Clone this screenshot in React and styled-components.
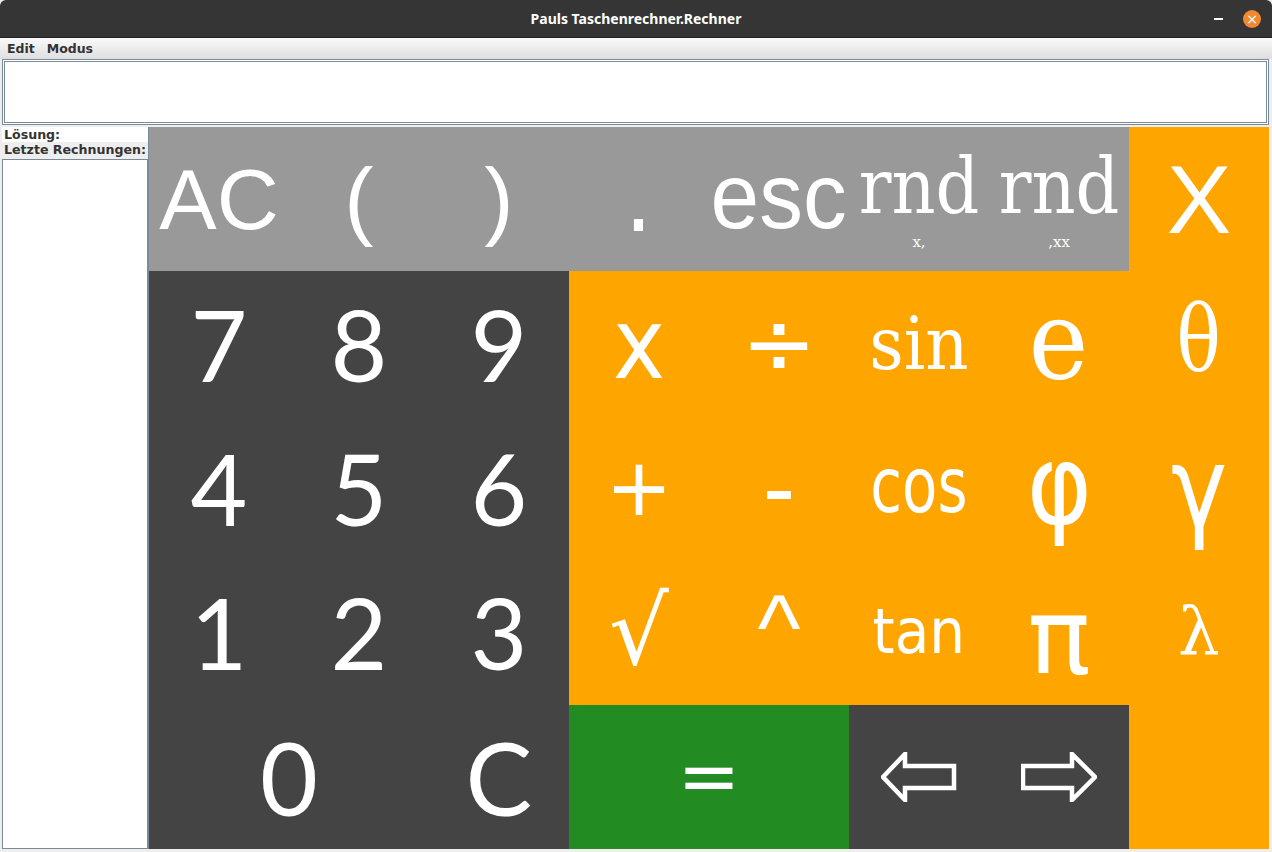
import React from 'react'
import styled, { createGlobalStyle } from 'styled-components'

const GlobalStyle = createGlobalStyle`
  html, body { margin: 0; padding: 0; background: #ffffff; }
  body { font-family: "DejaVu Sans", sans-serif; }
`

const fonts = {
  sans: '"Liberation Sans", Arial, sans-serif',
  dvs: '"DejaVu Sans", "Noto Sans", sans-serif',
  serif: '"DejaVu Serif", "Liberation Serif", serif',
  lato: 'Lato, "Noto Sans", sans-serif',
}

const colors = {
  grey: '#999999',
  dark: '#444444',
  orange: '#ffa500',
  green: '#228b22',
}

// Tasten in Lese-Reihenfolge, so wie das Swing-Grid sie legt
const keys = [
  { t: 'AC', bg: 'grey', f: 'sans', size: 86 },
  { t: '(', bg: 'grey', f: 'sans', size: 88 },
  { t: ')', bg: 'grey', f: 'sans', size: 88 },
  { t: '.', bg: 'grey', f: 'sans', size: 112, sx: 0.85, dy: -6 },
  { t: 'esc', bg: 'grey', f: 'sans', size: 92, sx: 0.95, dy: -3 },
  { t: 'rnd', sub: 'x,', bg: 'grey', f: 'serif', size: 76, sx: 0.9 },
  { t: 'rnd', sub: ',xx', bg: 'grey', f: 'serif', size: 76, sx: 0.9 },
  { t: 'X', bg: 'orange', f: 'sans', size: 97 },

  { t: '7', bg: 'dark', f: 'lato', size: 98 },
  { t: '8', bg: 'dark', f: 'lato', size: 98 },
  { t: '9', bg: 'dark', f: 'lato', size: 98 },
  { t: 'x', bg: 'orange', f: 'dvs', size: 98, sx: 0.9 },
  { t: '÷', bg: 'orange', f: 'dvs', size: 90 },
  { t: 'sin', bg: 'orange', f: 'serif', size: 73, sx: 0.92 },
  { t: 'e', bg: 'orange', f: 'serif', size: 110, sx: 0.92, dy: -4 },
  { t: 'θ', bg: 'orange', f: 'serif', size: 92, sx: 0.8, dy: -4 },

  { t: '4', bg: 'dark', f: 'lato', size: 98 },
  { t: '5', bg: 'dark', f: 'lato', size: 98 },
  { t: '6', bg: 'dark', f: 'lato', size: 98 },
  { t: '+', bg: 'orange', f: 'dvs', size: 80 },
  { t: '-', bg: 'orange', f: 'dvs', size: 100, sx: 0.9 },
  { t: 'cos', bg: 'orange', f: 'dvs', size: 76, sx: 0.76, dy: -2 },
  { t: 'φ', bg: 'orange', f: 'dvs', size: 110, sx: 0.9, dy: -3 },
  { t: 'γ', bg: 'orange', f: 'dvs', size: 112, sx: 0.85 },

  { t: '1', bg: 'dark', f: 'lato', size: 98 },
  { t: '2', bg: 'dark', f: 'lato', size: 98 },
  { t: '3', bg: 'dark', f: 'lato', size: 98 },
  { t: '√', bg: 'orange', f: 'dvs', size: 94 },
  { t: '^', bg: 'orange', f: 'sans', size: 92, dy: -4 },
  { t: 'tan', bg: 'orange', f: 'dvs', size: 62, sx: 0.91 },
  { t: 'π', bg: 'orange', f: 'dvs', size: 105, dy: 5 },
  { t: 'λ', bg: 'orange', f: 'serif', size: 66 },

  { t: '0', bg: 'dark', f: 'lato', size: 100, span: 2 },
  { t: 'C', bg: 'dark', f: 'lato', size: 100 },
  { t: '=', bg: 'green', f: 'dvs', size: 75, span: 2 },
  { icon: 'left', bg: 'dark' },
  { icon: 'right', bg: 'dark' },
  { bg: 'orange' },
]

function Arrow({ dir }) {
  const pts = dir === 'left'
    ? '2,25 24,2 24,14 73,14 73,36 24,36 24,48'
    : '2,14 51,14 51,2 74,25 51,48 51,36 2,36'
  return (
    <svg width="76" height="50" viewBox="0 0 76 50">
      <polygon points={pts} fill="none" stroke="#fff" strokeWidth="4.5" strokeLinejoin="miter" />
    </svg>
  )
}

export default function App() {
  return (
    <>
      <GlobalStyle />
      <Window>
        <TitleBar>
          <Title>Pauls Taschenrechner.Rechner</Title>
          <WinButtons>
            <Minimize />
            <Close>×</Close>
          </WinButtons>
        </TitleBar>
        <MenuBar>
          <MenuItem>Edit</MenuItem>
          <MenuItem>Modus</MenuItem>
        </MenuBar>
        <Body>
          <Display />
          <Main>
            <Side>
              <SideLabel>Lösung:</SideLabel>
              <SideLabel $alt>Letzte Rechnungen:</SideLabel>
              <History />
            </Side>
            <Pad>
              {keys.map((k, i) => (
                <Key key={i} $bg={colors[k.bg]} $span={k.span}>
                  {k.icon && <Arrow dir={k.icon} />}
                  {k.t && !k.sub && (
                    <Label $f={fonts[k.f]} $size={k.size} $sx={k.sx} $dy={k.dy}>{k.t}</Label>
                  )}
                  {k.sub && (
                    <Stack>
                      <Label $f={fonts[k.f]} $size={k.size} $sx={k.sx}>{k.t}</Label>
                      <Sub>{k.sub}</Sub>
                    </Stack>
                  )}
                </Key>
              ))}
            </Pad>
          </Main>
        </Body>
      </Window>
    </>
  )
}

const Window = styled.div`
  width: 1272px;
  height: 852px;
  display: flex;
  flex-direction: column;
  background: #eeeeee;
  overflow: hidden;
`

const TitleBar = styled.div`
  position: relative;
  height: 38px;
  flex: none;
  background: #353535;
  border-radius: 6px 6px 0 0;
  display: flex;
  align-items: center;
  justify-content: center;
  border-bottom: 1px solid #1f1f1f;
  box-sizing: border-box;
`

const Title = styled.div`
  color: #ffffff;
  font-family: "Noto Sans", "DejaVu Sans", sans-serif;
  font-weight: bold;
  font-size: 14px;
`

const WinButtons = styled.div`
  position: absolute;
  right: 11px;
  top: 10px;
  display: flex;
  align-items: center;
  gap: 20px;
`

const Minimize = styled.div`
  width: 9px;
  height: 1.5px;
  background: #ffffff;
`

const Close = styled.div`
  width: 18px;
  height: 18px;
  border-radius: 50%;
  background: #ef8a30;
  color: #ffffff;
  font-family: "DejaVu Sans", sans-serif;
  font-size: 14px;
  line-height: 18px;
  text-align: center;
`

const MenuBar = styled.div`
  height: 21px;
  flex: none;
  display: flex;
  align-items: center;
  gap: 12px;
  padding-left: 7px;
  background: linear-gradient(#fafafa, #dedede);
  box-sizing: border-box;
`

const MenuItem = styled.span`
  font-family: "DejaVu Sans", sans-serif;
  font-weight: bold;
  font-size: 12.5px;
  color: #333333;
`

const Body = styled.div`
  flex: 1;
  display: flex;
  flex-direction: column;
  padding: 0 3px 3px 2px;
  background: #eeeeee;
  min-height: 0;
`

const Display = styled.div`
  height: 66px;
  flex: none;
  box-sizing: border-box;
  background: #ffffff;
  border: 3px double #7a8a99;
  margin-bottom: 2px;
`

const Main = styled.div`
  flex: 1;
  display: flex;
  min-height: 0;
`

const Side = styled.div`
  width: 146px;
  flex: none;
  display: flex;
  flex-direction: column;
  border-right: 1px solid #7a8a99;
`

const SideLabel = styled.div`
  height: 15px;
  line-height: 15px;
  padding-left: 2px;
  font-family: "DejaVu Sans", sans-serif;
  font-weight: bold;
  font-size: 12.6px;
  color: #333333;
  background: ${p => (p.$alt ? '#eeeeee' : '#ffffff')};
  white-space: nowrap;
  overflow: hidden;
`

const History = styled.div`
  flex: 1;
  margin-top: 2px;
  background: #ffffff;
  border: 1px solid #7a8a99;
`

const Pad = styled.div`
  width: 1120px;
  display: grid;
  grid-template-columns: repeat(8, 140px);
  grid-template-rows: repeat(5, 1fr);
`

const Key = styled.div`
  background: ${p => p.$bg};
  grid-column: span ${p => p.$span || 1};
  display: flex;
  align-items: center;
  justify-content: center;
  overflow: hidden;
`

const Stack = styled.div`
  display: flex;
  flex-direction: column;
  align-items: center;
`

const Label = styled.span`
  display: inline-block;
  font-family: ${p => p.$f};
  font-size: ${p => p.$size}px;
  line-height: 1;
  color: #ffffff;
  white-space: nowrap;
  transform: translateY(${p => p.$dy || 0}px) scaleX(${p => p.$sx || 1});
`

const Sub = styled.span`
  font-family: "DejaVu Serif", serif;
  font-size: 15px;
  line-height: 1;
  color: #ffffff;
  margin-top: 10px;
`
